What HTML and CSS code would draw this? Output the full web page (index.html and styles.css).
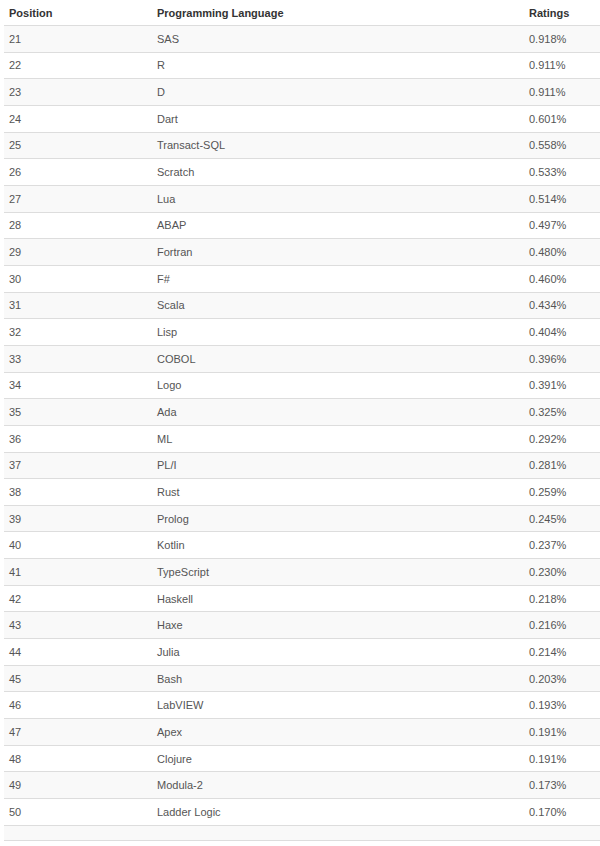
FILE: index.html
```html
<!DOCTYPE html>
<html>
<head>
<meta charset="utf-8">
<link rel="stylesheet" href="styles.css">
</head>
<body>
<table class="rank">
<thead>
<tr><th class="c1">Position</th><th class="c2">Programming Language</th><th class="c3">Ratings</th></tr>
</thead>
<tbody>
<tr><td>21</td><td>SAS</td><td>0.918%</td></tr>
<tr><td>22</td><td>R</td><td>0.911%</td></tr>
<tr><td>23</td><td>D</td><td>0.911%</td></tr>
<tr><td>24</td><td>Dart</td><td>0.601%</td></tr>
<tr><td>25</td><td>Transact-SQL</td><td>0.558%</td></tr>
<tr><td>26</td><td>Scratch</td><td>0.533%</td></tr>
<tr><td>27</td><td>Lua</td><td>0.514%</td></tr>
<tr><td>28</td><td>ABAP</td><td>0.497%</td></tr>
<tr><td>29</td><td>Fortran</td><td>0.480%</td></tr>
<tr><td>30</td><td>F#</td><td>0.460%</td></tr>
<tr><td>31</td><td>Scala</td><td>0.434%</td></tr>
<tr><td>32</td><td>Lisp</td><td>0.404%</td></tr>
<tr><td>33</td><td>COBOL</td><td>0.396%</td></tr>
<tr><td>34</td><td>Logo</td><td>0.391%</td></tr>
<tr><td>35</td><td>Ada</td><td>0.325%</td></tr>
<tr><td>36</td><td>ML</td><td>0.292%</td></tr>
<tr><td>37</td><td>PL/I</td><td>0.281%</td></tr>
<tr><td>38</td><td>Rust</td><td>0.259%</td></tr>
<tr><td>39</td><td>Prolog</td><td>0.245%</td></tr>
<tr><td>40</td><td>Kotlin</td><td>0.237%</td></tr>
<tr><td>41</td><td>TypeScript</td><td>0.230%</td></tr>
<tr><td>42</td><td>Haskell</td><td>0.218%</td></tr>
<tr><td>43</td><td>Haxe</td><td>0.216%</td></tr>
<tr><td>44</td><td>Julia</td><td>0.214%</td></tr>
<tr><td>45</td><td>Bash</td><td>0.203%</td></tr>
<tr><td>46</td><td>LabVIEW</td><td>0.193%</td></tr>
<tr><td>47</td><td>Apex</td><td>0.191%</td></tr>
<tr><td>48</td><td>Clojure</td><td>0.191%</td></tr>
<tr><td>49</td><td>Modula-2</td><td>0.173%</td></tr>
<tr><td>50</td><td>Ladder Logic</td><td>0.170%</td></tr>
<tr class="empty"><td></td><td></td><td></td></tr>
</tbody>
</table>
</body>
</html>
```
FILE: styles.css
```css
html, body {
  margin: 0;
  padding: 0;
  background: #fff;
}
body {
  font-family: "Liberation Sans", Arial, sans-serif;
  font-size: 11px;
  color: #555;
  overflow: hidden;
}
.rank {
  border-collapse: collapse;
  margin-left: 4px;
  width: 620px;
  table-layout: fixed;
}
.rank th, .rank td {
  padding: 0 5px;
  text-align: left;
  vertical-align: middle;
}
.rank th {
  font-weight: bold;
  color: #333;
  height: 25px;
  border-bottom: 1px solid #ddd;
}
.rank td {
  height: 25.66px;
  border-top: 1px solid #ddd;
}
.rank tbody tr:nth-child(odd) td {
  background: #f9f9f9;
}
.rank .c1 { width: 138px; }
.rank .c2 { width: 362px; }
.rank tr.empty td {
  height: 14px;
  border-bottom: 1px solid #ddd;
}
```
